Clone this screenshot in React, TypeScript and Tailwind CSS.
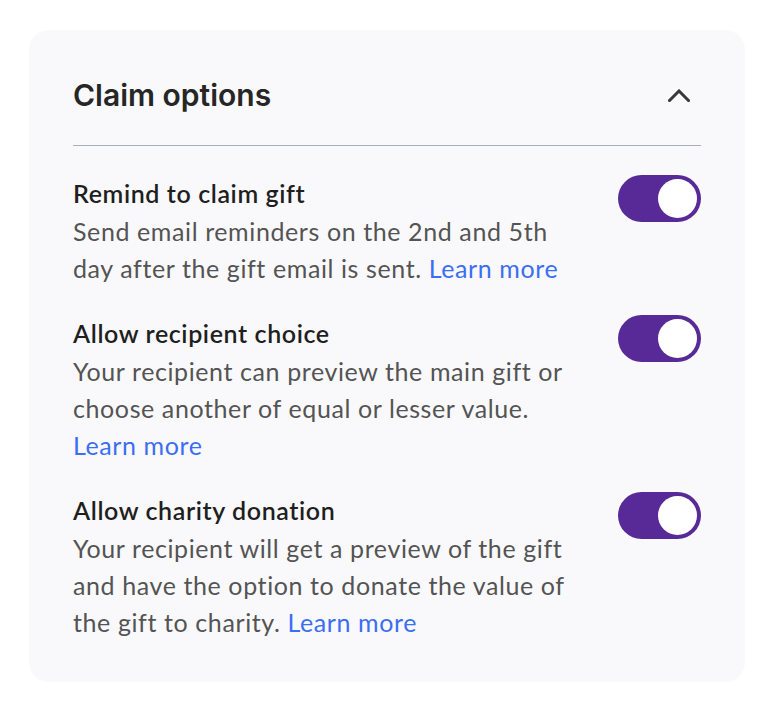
import { useState } from 'react';

interface ClaimOption {
  id: string;
  title: string;
  description: string;
}

const OPTIONS: ClaimOption[] = [
  {
    id: 'remind',
    title: 'Remind to claim gift',
    description: 'Send email reminders on the 2nd and 5th day after the gift email is sent.',
  },
  {
    id: 'choice',
    title: 'Allow recipient choice',
    description: 'Your recipient can preview the main gift or choose another of equal or lesser value.',
  },
  {
    id: 'charity',
    title: 'Allow charity donation',
    description:
      'Your recipient will get a preview of the gift and have the option to donate the value of the gift to charity.',
  },
];

function Toggle({ checked, onChange }: { checked: boolean; onChange: () => void }) {
  return (
    <button
      type="button"
      role="switch"
      aria-checked={checked}
      onClick={onChange}
      className={`flex h-[47px] w-[83px] shrink-0 items-center rounded-full p-[4px] ${
        checked ? 'justify-end bg-[#582a97]' : 'justify-start bg-[#c7c7cf]'
      }`}
    >
      <span className="block h-[39px] w-[39px] rounded-full bg-white" />
    </button>
  );
}

export default function App() {
  const [open, setOpen] = useState(true);
  const [enabled, setEnabled] = useState<Record<string, boolean>>({
    remind: true,
    choice: true,
    charity: true,
  });

  return (
    <div className="min-h-screen bg-white pl-[29px] pt-[30px] font-['Lato',sans-serif]">
      <div className="w-[716px] rounded-[20px] bg-[#f9f9fb] px-[44px] pb-[41px] pt-[47px]">
        <div className="flex items-center justify-between border-b border-[#a9aeb9] pb-[32px]">
          <h2 className="font-['Inter',sans-serif] text-[30px] leading-[36px] font-semibold text-[#262626]">
            Claim options
          </h2>
          <button type="button" onClick={() => setOpen(!open)} className="mr-[11px]" aria-label="Collapse">
            <svg width="22" height="13" viewBox="0 0 22 13" fill="none">
              <path d="M1.5 11.5L11 2l9.5 9.5" stroke="#383838" strokeWidth="3" strokeLinecap="square" />
            </svg>
          </button>
        </div>

        {open && (
          <div className="flex flex-col gap-[28px] pt-[29px]">
            {OPTIONS.map((opt) => (
              <div key={opt.id} className="flex items-start justify-between">
                <div className="w-[500px] tracking-[0.6px]">
                  <div className="text-[25px] leading-[37px] font-semibold text-[#1f1f1f]">{opt.title}</div>
                  <p className="mt-[1px] text-[25px] leading-[37px] text-[#545454]">
                    {opt.description}{' '}
                    <a href="#" className="whitespace-nowrap text-[#3b6ef3]">
                      Learn more
                    </a>
                  </p>
                </div>
                <Toggle
                  checked={enabled[opt.id]}
                  onChange={() => setEnabled({ ...enabled, [opt.id]: !enabled[opt.id] })}
                />
              </div>
            ))}
          </div>
        )}
      </div>
    </div>
  );
}
